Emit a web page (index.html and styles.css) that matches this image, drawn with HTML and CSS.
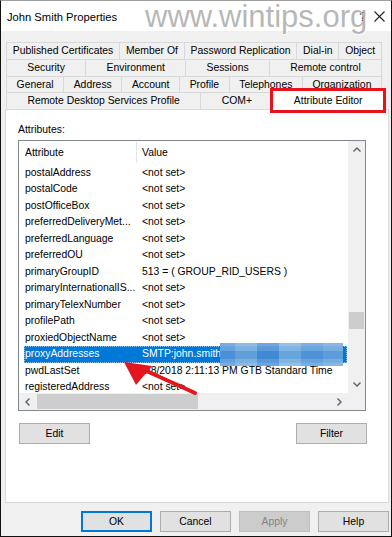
FILE: index.html
```html
<!DOCTYPE html>
<html lang="en">
<head>
    <meta charset="UTF-8">
    <meta name="viewport" content="width=device-width, initial-scale=1.0">
    <title>John Smith Properties</title>
    <link rel="stylesheet" href="styles.css">
</head>
<body>
    <div class="window">
        <div class="titlebar">
            <span class="title">John Smith Properties</span>
            <span class="title-buttons">
                <span class="help-btn">?</span>
                <svg class="close-btn" width="11" height="11" viewBox="0 0 11 11">
                    <path d="M0.5 0.5 L10.5 10.5 M10.5 0.5 L0.5 10.5" stroke="#222" stroke-width="1.1" fill="none"/>
                </svg>
            </span>
            <span class="watermark">www.wintips.org</span>
        </div>

        <div class="body">
            <div class="tabs">
                <div class="tab-row">
                    <span class="tab">Published Certificates</span>
                    <span class="tab">Member Of</span>
                    <span class="tab">Password Replication</span>
                    <span class="tab">Dial-in</span>
                    <span class="tab">Object</span>
                </div>
                <div class="tab-row">
                    <span class="tab">Security</span>
                    <span class="tab">Environment</span>
                    <span class="tab">Sessions</span>
                    <span class="tab">Remote control</span>
                </div>
                <div class="tab-row">
                    <span class="tab">General</span>
                    <span class="tab">Address</span>
                    <span class="tab">Account</span>
                    <span class="tab">Profile</span>
                    <span class="tab">Telephones</span>
                    <span class="tab">Organization</span>
                </div>
                <div class="tab-row">
                    <span class="tab">Remote Desktop Services Profile</span>
                    <span class="tab">COM+</span>
                    <span class="tab tab-active">Attribute Editor</span>
                </div>
            </div>

            <div class="panel">
                <div class="label">Attributes:</div>
                <div class="listview">
                    <div class="list-content">
                        <div class="list-header">
                            <span class="col-attr">Attribute</span>
                            <span class="col-val">Value</span>
                        </div>
                        <div class="list-rows">
                            <div class="row"><span class="col-attr">postalAddress</span><span class="col-val">&lt;not set&gt;</span></div>
                            <div class="row"><span class="col-attr">postalCode</span><span class="col-val">&lt;not set&gt;</span></div>
                            <div class="row"><span class="col-attr">postOfficeBox</span><span class="col-val">&lt;not set&gt;</span></div>
                            <div class="row"><span class="col-attr">preferredDeliveryMet...</span><span class="col-val">&lt;not set&gt;</span></div>
                            <div class="row"><span class="col-attr">preferredLanguage</span><span class="col-val">&lt;not set&gt;</span></div>
                            <div class="row"><span class="col-attr">preferredOU</span><span class="col-val">&lt;not set&gt;</span></div>
                            <div class="row"><span class="col-attr">primaryGroupID</span><span class="col-val">513 = ( GROUP_RID_USERS )</span></div>
                            <div class="row"><span class="col-attr">primaryInternationalIS...</span><span class="col-val">&lt;not set&gt;</span></div>
                            <div class="row"><span class="col-attr">primaryTelexNumber</span><span class="col-val">&lt;not set&gt;</span></div>
                            <div class="row"><span class="col-attr">profilePath</span><span class="col-val">&lt;not set&gt;</span></div>
                            <div class="row"><span class="col-attr">proxiedObjectName</span><span class="col-val">&lt;not set&gt;</span></div>
                            <div class="row row-selected"><span class="col-attr">proxyAddresses</span><span class="col-val">SMTP:john.smith</span><span class="blur"></span></div>
                            <div class="row"><span class="col-attr">pwdLastSet</span><span class="col-val">5/8/2018 2:11:13 PM GTB Standard Time</span></div>
                            <div class="row"><span class="col-attr">registeredAddress</span><span class="col-val">&lt;not set&gt;</span></div>
                        </div>
                    </div>
                    <div class="vscroll">
                        <span class="sb-arrow">
                            <svg width="8" height="5" viewBox="0 0 8 5"><path d="M0.5 4.5 L4 1 L7.5 4.5" stroke="#606060" stroke-width="1.4" fill="none"/></svg>
                        </span>
                        <span class="vtrack"><span class="vthumb"></span></span>
                        <span class="sb-arrow">
                            <svg width="8" height="5" viewBox="0 0 8 5"><path d="M0.5 0.5 L4 4 L7.5 0.5" stroke="#606060" stroke-width="1.4" fill="none"/></svg>
                        </span>
                    </div>
                    <div class="hscroll">
                        <span class="sb-arrow">
                            <svg width="5" height="8" viewBox="0 0 5 8"><path d="M4.5 0.5 L1 4 L4.5 7.5" stroke="#606060" stroke-width="1.4" fill="none"/></svg>
                        </span>
                        <span class="htrack"><span class="hthumb"></span></span>
                        <span class="sb-arrow">
                            <svg width="5" height="8" viewBox="0 0 5 8"><path d="M0.5 0.5 L4 4 L0.5 7.5" stroke="#606060" stroke-width="1.4" fill="none"/></svg>
                        </span>
                    </div>
                    <div class="corner"></div>
                </div>

                <div class="panel-buttons">
                    <button class="btn">Edit</button>
                    <button class="btn">Filter</button>
                </div>
            </div>

            <div class="dialog-buttons">
                <button class="btn btn-default">OK</button>
                <button class="btn">Cancel</button>
                <button class="btn" disabled>Apply</button>
                <button class="btn">Help</button>
            </div>
        </div>

        <!-- red arrow annotation -->
        <svg class="arrow" width="80" height="45" viewBox="0 0 80 45">
            <path d="M20 13 L75 38" stroke="#e3161e" stroke-width="4" stroke-linecap="round"/>
            <polygon points="4,7 32,11 16,30" fill="#e3161e"/>
        </svg>
    </div>
</body>
</html>
```

FILE: styles.css
```css
* {
    box-sizing: border-box;
}

body {
    margin: 0;
    font-family: "Liberation Sans", Arial, sans-serif;
    font-size: 10.4px;
    color: #000;
    background: #fff;
}

.window {
    position: relative;
    width: 392px;
    height: 537px;
    border: 1px solid #111;
    border-top-color: #a0a0a0;
    background: #f0f0f0;
    overflow: hidden;
}

/* title bar */
.titlebar {
    position: relative;
    height: 30px;
    background: #fff;
    display: flex;
    align-items: center;
    justify-content: space-between;
    padding: 0 6px 0 6px;
}

.title {
    font-size: 11.2px;
    margin-top: 1px;
}

.title-buttons {
    display: flex;
    align-items: center;
    gap: 8px;
    margin-top: 1px;
}

.help-btn {
    font-size: 12px;
    color: #222;
}

/* watermark of the screenshot's source, over the title bar */
.watermark {
    position: absolute;
    left: 144px;
    top: -2px;
    font-size: 31px;
    color: rgba(135, 135, 135, 0.6);
    text-shadow: 1px 1px 0 rgba(255, 255, 255, 0.9);
    pointer-events: none;
}

/* body */
.body {
    padding: 11px 2px 4px 4px;
}

.tabs {
    margin-left: 1px;
    width: 376px;
}

.tab-row {
    display: flex;
    height: 16.75px;
}

.tab {
    flex: 1 1 auto;
    padding: 0 5px;
    text-align: center;
    line-height: 16px;
    border: 1px solid #d9d9d9;
    border-bottom: none;
    margin-left: -1px;
    white-space: nowrap;
    background: #f0f0f0;
}

.tab:first-child {
    margin-left: 0;
}

.tab-active {
    position: relative;
    z-index: 2;
    background: #fff;
    margin: -2px -2px -1px -1px;
    line-height: 19px;
}

.tab-active::after {
    content: "";
    position: absolute;
    left: -3px;
    right: -3px;
    top: -3px;
    bottom: -3px;
    border: 3px solid #e8121c;
}

.panel {
    position: relative;
    height: 394px;
    width: 384px;
    background: #fff;
    border: 1px solid #d9d9d9;
    padding: 13px 22px 0 12px;
}

.label {
    line-height: 13px;
    margin-bottom: 4px;
}

.listview {
    height: 271px;
    border: 1px solid #828790;
    display: grid;
    grid-template-columns: 1fr 17px;
    grid-template-rows: 1fr 17px;
}

.list-content {
    overflow: hidden;
    background: #fff;
}

.list-header {
    display: flex;
    height: 23.75px;
    align-items: center;
    padding-left: 5px;
}

.list-header .col-attr {
    border-right: 1px solid #e5e5e5;
    height: 21px;
    line-height: 21px;
}

.list-rows {
    padding-left: 5px;
}

.row {
    position: relative;
    display: flex;
    height: 16.5px;
    line-height: 16.5px;
    white-space: nowrap;
}

.col-attr {
    width: 113px;
    flex: none;
    padding-left: 1px;
}

.col-val {
    padding-left: 5px;
}

.row-selected {
    background: #0078d7;
    color: #fff;
    outline: 1px dotted #8fc4f0;
    outline-offset: -1px;
    margin-right: 1px;
}

/* pixelated blur over the e-mail address */
.blur {
    position: absolute;
    left: 196px;
    top: -3px;
    width: 123px;
    height: 23px;
    background:
        linear-gradient(180deg, rgba(255, 255, 255, 0.12) 0 35%, rgba(0, 60, 140, 0.08) 35% 70%, rgba(255, 255, 255, 0.1) 70% 100%),
        linear-gradient(90deg, #5a9bdc 0 12%, #74addf 12% 30%, #4d92d8 30% 48%, #7ab2e3 48% 66%, #5d9edc 66% 84%, #6ea9e0 84% 100%);
    opacity: 0.92;
}

.vscroll {
    display: flex;
    flex-direction: column;
    background: #f0f0f0;
}

.sb-arrow {
    flex: none;
    width: 17px;
    height: 17px;
    display: flex;
    align-items: center;
    justify-content: center;
}

.vtrack {
    flex: 1;
}

.vthumb {
    display: block;
    margin: 154px 1px 0 1px;
    height: 17px;
    background: #cdcdcd;
}

.hscroll {
    display: flex;
    background: #f0f0f0;
}

.htrack {
    flex: 1;
}

.hthumb {
    display: block;
    margin: 1px 0 0 1px;
    width: 161px;
    height: 15px;
    background: #cdcdcd;
}

.corner {
    background: #f0f0f0;
}

.panel-buttons {
    display: flex;
    justify-content: space-between;
    margin: 12px -1px 0 1px;
}

.btn {
    width: 71px;
    height: 21px;
    padding: 0;
    font-family: "Liberation Sans", Arial, sans-serif;
    font-size: 10.4px;
    color: #000;
    background: #e1e1e1;
    border: 1px solid #adadad;
}

.btn-default {
    border-color: #0078d7;
    box-shadow: inset 0 0 0 1px #0078d7;
}

.btn:disabled {
    background: #cccccc;
    border-color: #bfbfbf;
    color: #838383;
}

.dialog-buttons {
    display: flex;
    justify-content: flex-end;
    gap: 8px;
    margin-top: 8px;
}

.arrow {
    position: absolute;
    left: 119px;
    top: 354px;
    z-index: 3;
}
```
